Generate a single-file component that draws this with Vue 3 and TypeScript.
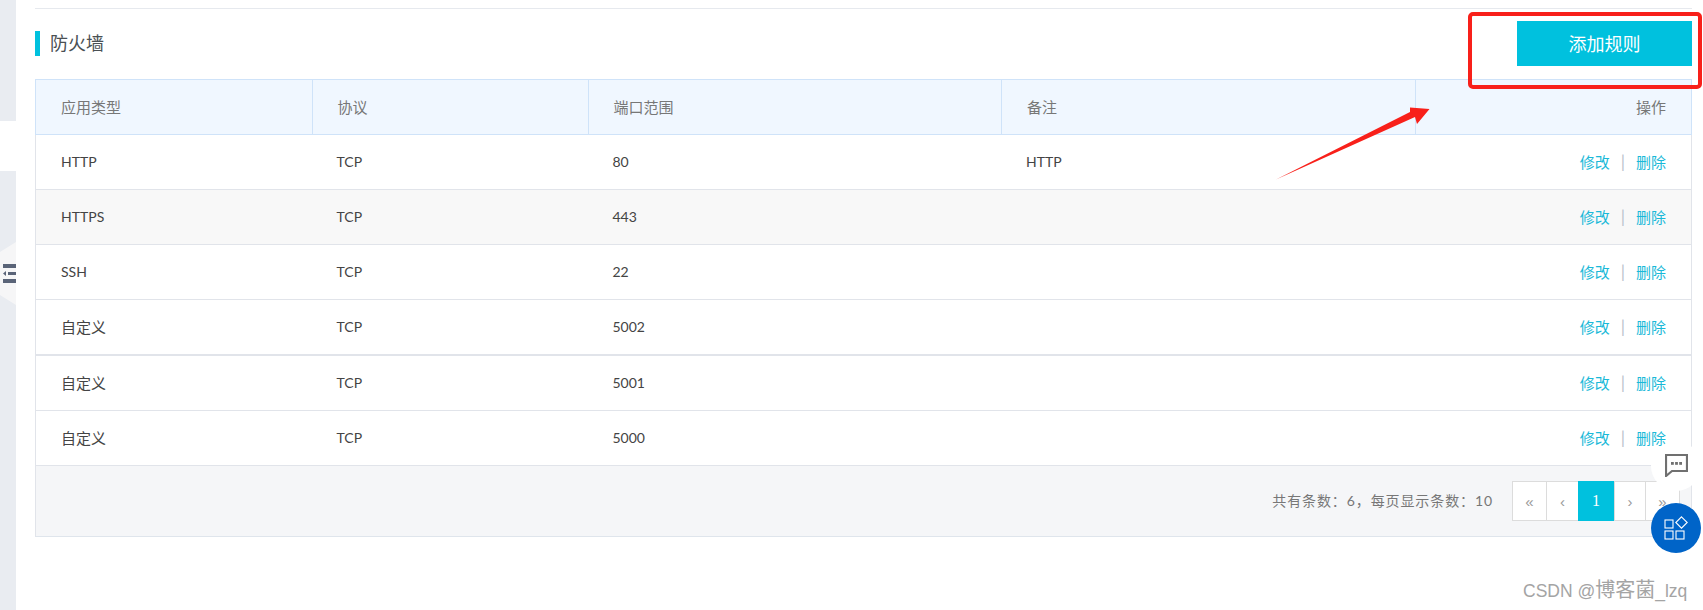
<script setup lang="ts">
interface Row { type: string; proto: string; port: string; note: string }
const rows: Row[] = [
  { type: 'HTTP', proto: 'TCP', port: '80', note: 'HTTP' },
  { type: 'HTTPS', proto: 'TCP', port: '443', note: '' },
  { type: 'SSH', proto: 'TCP', port: '22', note: '' },
  { type: '自定义', proto: 'TCP', port: '5002', note: '' },
  { type: '自定义', proto: 'TCP', port: '5001', note: '' },
  { type: '自定义', proto: 'TCP', port: '5000', note: '' },
]
const pages = [
  { label: '«', width: 33 },
  { label: '‹', width: 32 },
  { label: '1', width: 36 },
  { label: '›', width: 31 },
  { label: '»', width: 34 },
]
const isCjk = (s: string): boolean => /[^\x00-\x7f]/.test(s)
</script>

<template>
  <div class="page">
    <aside class="rail">
      <div class="rail-top"></div>
      <div class="rail-gap"></div>
      <div class="rail-bottom">
        <div class="rail-tab">
          <svg width="13" height="19" viewBox="0 0 13 19">
            <rect x="0" y="0" width="13" height="4" fill="#5a6478" />
            <rect x="0" y="15" width="13" height="4" fill="#5a6478" />
            <rect x="5" y="8" width="8" height="3" fill="#5a6478" />
            <path d="M0 9.500l3-2.500v5z" fill="#5a6478" />
          </svg>
        </div>
      </div>
    </aside>
    <main class="content">
      <div class="top-line"></div>
      <header class="head">
        <h2 class="title">防火墙</h2>
        <button class="add">添加规则</button>
      </header>
      <div class="table">
        <div class="row row-head">
          <div class="cell">应用类型</div>
          <div class="cell">协议</div>
          <div class="cell">端口范围</div>
          <div class="cell">备注</div>
          <div class="cell cell-end">操作</div>
        </div>
        <div v-for="(r, i) in rows" :key="i" class="row" :class="{ alt: i === 1, strong: i === 3 }">
          <div class="cell" :class="{ cjk: isCjk(r.type) }">{{ r.type }}</div>
          <div class="cell">{{ r.proto }}</div>
          <div class="cell">{{ r.port }}</div>
          <div class="cell">{{ r.note }}</div>
          <div class="cell cell-end">
            <a class="link">修改</a><span class="sep">|</span><a class="link">删除</a>
          </div>
        </div>
        <footer class="foot">
          <span class="summary">共有条数：6，每页显示条数：10</span>
          <div class="pager">
            <span
              v-for="p in pages"
              :key="p.label"
              class="pg"
              :class="{ on: p.label === '1' }"
              :style="{ width: p.width + 'px' }"
            >{{ p.label }}</span>
          </div>
        </footer>
      </div>
    </main>

    <svg class="arrow" width="170" height="90" viewBox="0 0 170 90">
      <path d="M4 79.500 L138 12 L138 7.500 L157.500 9 L145 24 L143 17 Z" fill="#f8201a" />
    </svg>
    <div class="mark"></div>
    <div class="fab fab-chat">
      <svg width="23" height="23" viewBox="0 0 23 23">
        <path d="M1 1h21v16H7l-6 5z" fill="none" stroke="#707070" stroke-width="2.200" />
        <rect x="6" y="8" width="2.800" height="2.800" fill="#707070" />
        <rect x="10.100" y="8" width="2.800" height="2.800" fill="#707070" />
        <rect x="14.200" y="8" width="2.800" height="2.800" fill="#707070" />
      </svg>
    </div>
    <div class="fab fab-apps">
      <svg width="24" height="24" viewBox="0 0 24 24" fill="none" stroke="#fff" stroke-width="1.1">
        <rect x="1" y="4" width="8" height="8" />
        <rect x="1" y="15" width="8" height="8" />
        <rect x="12" y="15" width="8" height="8" />
        <path d="M17.500 0.800l5.700 5.700-5.700 5.700-5.700-5.700z" />
      </svg>
    </div>
    <div class="watermark">CSDN @<span class="wm-cjk">博客菌</span>_lzq</div>
  </div>
</template>

<style>
html, body { margin: 0; background: #fff; overflow: hidden; }
</style>

<style scoped>
.page {
  position: relative;
  display: flex;
  width: 1703px;
  height: 610px;
  overflow: hidden;
  background: #fff;
  font-family: Lato, "Noto Sans CJK SC", sans-serif;
  font-size: 14px;
  color: #444;
}
.rail { width: 16px; flex: none; display: flex; flex-direction: column; }
.rail-top { height: 121px; background: #e9ecf1; }
.rail-gap { height: 50px; }
.rail-bottom { flex: 1; background: #e9ecf1; padding-top: 71px; }
.rail-tab {
  width: 16px;
  height: 63px;
  background: #f6f6f7;
  clip-path: polygon(100% 0, 100% 100%, 0 84%, 0 16%);
  display: flex;
  align-items: center;
  justify-content: flex-end;
}
.content { flex: 1; padding: 0 11px 0 19px; min-width: 0; }
.top-line { height: 8px; border-bottom: 1px solid #e6e9ee; }
.head {
  display: flex;
  align-items: center;
  justify-content: space-between;
  height: 45px;
  margin-top: 12px;
  margin-bottom: 13px;
}
.title {
  margin: 0;
  padding-left: 10px;
  height: 25px;
  line-height: 24px;
  border-left: 5px solid #00c1de;
  font-size: 18px;
  font-weight: 400;
  color: #4a5054;
}
.add {
  width: 175px;
  height: 45px;
  border: 0;
  padding: 0 0 2px;
  background: #00c1de;
  color: #fff;
  font: inherit;
  font-size: 18px;
}
.table { border: 1px solid #e1e4ea; border-top: 0; border-bottom-color: #dfe5ec; }
.row {
  display: grid;
  grid-template-columns: 275.500px 276px 413.500px 414px 1fr;
  border-bottom: 1px solid #e1e4ea;
  box-sizing: border-box;
  height: 55px;
  line-height: 20px;
  padding-bottom: 1px;
}
.row.alt { background: #f8f8f8; }
.row.strong { height: 56px; border-bottom-width: 2px; }
.row-head {
  height: 56px;
  margin: 0 -1px;
  background: #f0f7ff;
  border: 1px solid #cfe3f9;
  color: #777;
  font-size: 15px;
  padding-bottom: 0;
}
.row-head .cell + .cell { border-left: 1px solid #cfe3f9; }
.cell { display: flex; align-items: center; padding: 0 25px; min-width: 0; }
.cell.cjk { font-size: 15px; }
.cell-end { justify-content: flex-end; }
.link { color: #1ab9d8; font-size: 15px; }
.sep { margin: 0 11px; color: #b9c4cc; font-size: 17px; }
.foot {
  height: 70px;
  background: #f5f6f8;
  display: flex;
  align-items: center;
  justify-content: flex-end;
  padding-right: 11px;
  box-sizing: border-box;
}
.summary { color: #777; letter-spacing: 0.9px; margin: 0 19px 3px 0; }
.pager { display: flex; height: 40px; border: 1px solid #dcdcdc; box-sizing: border-box; background: #fff; }
.pg {
  box-sizing: border-box;
  display: flex;
  align-items: center;
  justify-content: center;
  color: #999;
  border-left: 1px solid #dcdcdc;
  font-family: "Liberation Sans", sans-serif;
  font-size: 15px;
}
.pg:first-child { border-left: 0; }
.pg.on {
  background: #00c1de;
  color: #fff;
  border: 0;
  margin: -1px 0;
  font-family: "Liberation Serif", serif;
  font-size: 16px;
}
.arrow { position: absolute; left: 1272px; top: 100px; }
.mark {
  position: absolute;
  left: 1468px;
  top: 12px;
  width: 234px;
  height: 77px;
  box-sizing: border-box;
  border: 4px solid #f8201a;
  border-radius: 5px;
}
.fab {
  position: absolute;
  left: 1651px;
  width: 50px;
  height: 50px;
  border-radius: 50%;
  display: flex;
  align-items: center;
  justify-content: center;
}
.fab-chat { top: 441px; background: #fff; padding-bottom: 2px; box-sizing: border-box; }
.fab-apps { top: 503px; background: #0064c8; }
.watermark {
  position: absolute;
  left: 1523px;
  top: 577px;
  font-family: "Liberation Sans", "Noto Sans CJK SC", sans-serif;
  font-size: 17.500px;
  line-height: 26px;
  color: #a4a4a4;
}
.wm-cjk { font-size: 20px; }
</style>
